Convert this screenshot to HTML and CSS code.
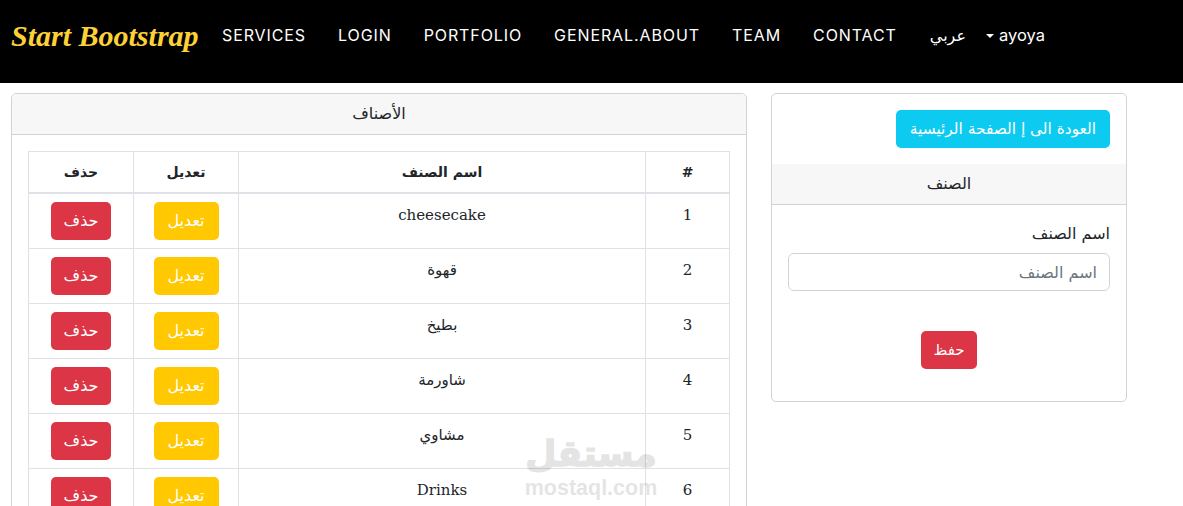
FILE: index.html
```html
<!DOCTYPE html>
<html lang="ar" dir="rtl">
<head>
  <meta charset="UTF-8" />
  <title>الأصناف</title>
  <link rel="stylesheet" href="styles.css">
</head>
<body>

  <nav class="navbar">
    <a class="brand" href="#">Start Bootstrap</a>
    <ul class="nav-links">
      <li><a href="#">Services</a></li>
      <li><a href="#">Login</a></li>
      <li><a href="#">Portfolio</a></li>
      <li><a href="#">general.about</a></li>
      <li><a href="#">Team</a></li>
      <li><a href="#">Contact</a></li>
    </ul>
    <a class="lang" href="#">عربي</a>
    <a class="user" href="#"><span class="caret"></span>ayoya</a>
  </nav>

  <main class="page">
    <section class="card form-card">
      <div class="back-row">
        <a class="btn btn-info" href="#">العودة الى إ الصفحة الرئيسية</a>
      </div>
      <div class="card-header">الصنف</div>
      <form class="card-body">
        <label class="form-label" for="name">اسم الصنف</label>
        <input class="form-input" type="text" id="name" placeholder="اسم الصنف" />
        <div class="form-actions">
          <button class="btn btn-danger btn-save" type="button">حفظ</button>
        </div>
      </form>
    </section>

    <section class="card list-card">
      <div class="card-header">الأصناف</div>
      <div class="list-body">
        <table class="table">
          <thead>
            <tr>
              <th class="col-num">#</th>
              <th>اسم الصنف</th>
              <th class="col-edit">تعديل</th>
              <th class="col-del">حذف</th>
            </tr>
          </thead>
          <tbody>
            <tr>
              <td>1</td>
              <td>cheesecake</td>
              <td><a class="btn btn-warning" href="#">تعديل</a></td>
              <td><a class="btn btn-danger" href="#">حذف</a></td>
            </tr>
            <tr>
              <td>2</td>
              <td>قهوة</td>
              <td><a class="btn btn-warning" href="#">تعديل</a></td>
              <td><a class="btn btn-danger" href="#">حذف</a></td>
            </tr>
            <tr>
              <td>3</td>
              <td>بطيخ</td>
              <td><a class="btn btn-warning" href="#">تعديل</a></td>
              <td><a class="btn btn-danger" href="#">حذف</a></td>
            </tr>
            <tr>
              <td>4</td>
              <td>شاورمة</td>
              <td><a class="btn btn-warning" href="#">تعديل</a></td>
              <td><a class="btn btn-danger" href="#">حذف</a></td>
            </tr>
            <tr>
              <td>5</td>
              <td>مشاوي</td>
              <td><a class="btn btn-warning" href="#">تعديل</a></td>
              <td><a class="btn btn-danger" href="#">حذف</a></td>
            </tr>
            <tr>
              <td>6</td>
              <td>Drinks</td>
              <td><a class="btn btn-warning" href="#">تعديل</a></td>
              <td><a class="btn btn-danger" href="#">حذف</a></td>
            </tr>
          </tbody>
        </table>
      </div>
    </section>
  </main>

  <div class="watermark">
    <div class="wm-arabic">مستقل</div>
    <div class="wm-latin">mostaql.com</div>
  </div>

</body>
</html>
```

FILE: styles.css
```css
* {
  box-sizing: border-box;
}

html, body {
  height: 506px;
  overflow: hidden;
}

body {
  margin: 0;
  position: relative;
  font-family: "Liberation Sans", "DejaVu Sans", sans-serif;
  font-size: 16px;
  line-height: 1.5;
  color: #212529;
  background: #fff;
}

a {
  text-decoration: none;
}

.navbar {
  direction: ltr;
  display: flex;
  align-items: center;
  height: 83px;
  padding: 0 0 12px 11px;
  background: #000;
}

.brand {
  width: 211px;
  font-family: "Liberation Serif", serif;
  font-style: italic;
  font-weight: bold;
  font-size: 30px;
  color: #fed136;
  white-space: nowrap;
}

.nav-links {
  display: flex;
  gap: 32px;
  margin: 0;
  padding: 0;
  list-style: none;
}

.nav-links a {
  font-family: "Inter", sans-serif;
  font-size: 16px;
  letter-spacing: 0.9px;
  text-transform: uppercase;
  color: #fff;
}

.lang {
  margin-left: 33px;
  font-family: "DejaVu Sans", sans-serif;
  font-size: 16px;
  color: #fff;
}

.user {
  margin-left: 20px;
  font-family: "Inter", sans-serif;
  font-size: 16.5px;
  color: #fff;
}

.caret {
  display: inline-block;
  margin-right: 5px;
  vertical-align: 3px;
  border-top: 4px solid #fff;
  border-left: 4px solid transparent;
  border-right: 4px solid transparent;
}

.page {
  display: flex;
  align-items: flex-start;
  gap: 24px;
  padding: 10px 56px 0 11px;
}

.card {
  background: #fff;
  border: 1px solid #d3d3d3;
  border-radius: 5px;
  overflow: hidden;
}

.form-card {
  width: 356px;
  height: 309px;
}

.list-card {
  width: 736px;
  flex-shrink: 0;
}

.card-header {
  height: 41px;
  line-height: 40px;
  text-align: center;
  font-family: "DejaVu Sans", sans-serif;
  font-size: 16px;
  background: #f7f7f7;
  border-bottom: 1px solid #d3d3d3;
}

.back-row {
  display: flex;
  padding: 16px;
}

.card-body {
  display: block;
  padding: 17px 16px 16px;
}

.form-label {
  display: block;
  margin-bottom: 7px;
  font-family: "DejaVu Sans", sans-serif;
  font-size: 16px;
}

.form-input {
  display: block;
  width: 100%;
  height: 38px;
  padding: 6px 12px;
  font-family: "DejaVu Sans", sans-serif;
  font-size: 16px;
  border: 1px solid #ced4da;
  border-radius: 6px;
}

.form-input::placeholder {
  color: #6c757d;
}

.form-actions {
  display: flex;
  justify-content: center;
  margin-top: 40px;
}

.btn {
  display: inline-block;
  height: 38px;
  padding: 0 13px;
  line-height: 36px;
  vertical-align: top;
  font-family: "DejaVu Sans", sans-serif;
  font-size: 15.4px;
  color: #fff;
  border: 1px solid transparent;
  border-radius: 5px;
}

.btn-info {
  background: #0dcaf0;
}

.btn-warning {
  width: 65px;
  padding: 0;
  font-size: 16px;
  background: #ffc800;
}

.btn-danger {
  width: 60px;
  padding: 0;
  font-size: 16px;
  background: #dc3545;
}

.btn-save {
  width: 56px;
  font-size: 15px;
}

.list-body {
  padding: 16px;
}

.table {
  width: 702px;
  border-collapse: collapse;
  table-layout: fixed;
  text-align: center;
}

.table th,
.table td {
  border: 1px solid #dee2e6;
}

.table th {
  height: 41px;
  padding: 2px 0 0;
  font-family: "DejaVu Sans", sans-serif;
  font-size: 14px;
  font-weight: bold;
  border-bottom-width: 2px;
  color: #212529;
}

.table td {
  height: 55px;
  padding: 8px 0 0;
  vertical-align: top;
  line-height: 27px;
  font-family: "DejaVu Serif", "DejaVu Sans", serif;
  font-size: 15px;
}

.table tbody tr:first-child td {
  height: 56px;
}

.col-num {
  width: 84px;
}

.col-edit,
.col-del {
  width: 105px;
}

.watermark {
  position: absolute;
  left: 524px;
  top: 434px;
  width: 134px;
  text-align: center;
  color: #000;
  opacity: 0.1;
  direction: ltr;
  pointer-events: none;
}

.wm-arabic {
  height: 44px;
  line-height: 40px;
  font-family: "DejaVu Sans", sans-serif;
  font-size: 36px;
  font-weight: bold;
  -webkit-text-stroke: 1.5px #000;
  white-space: nowrap;
}

.wm-latin {
  font-family: "Liberation Sans", sans-serif;
  font-size: 21.5px;
  font-weight: bold;
  line-height: 20px;
  white-space: nowrap;
}
```
